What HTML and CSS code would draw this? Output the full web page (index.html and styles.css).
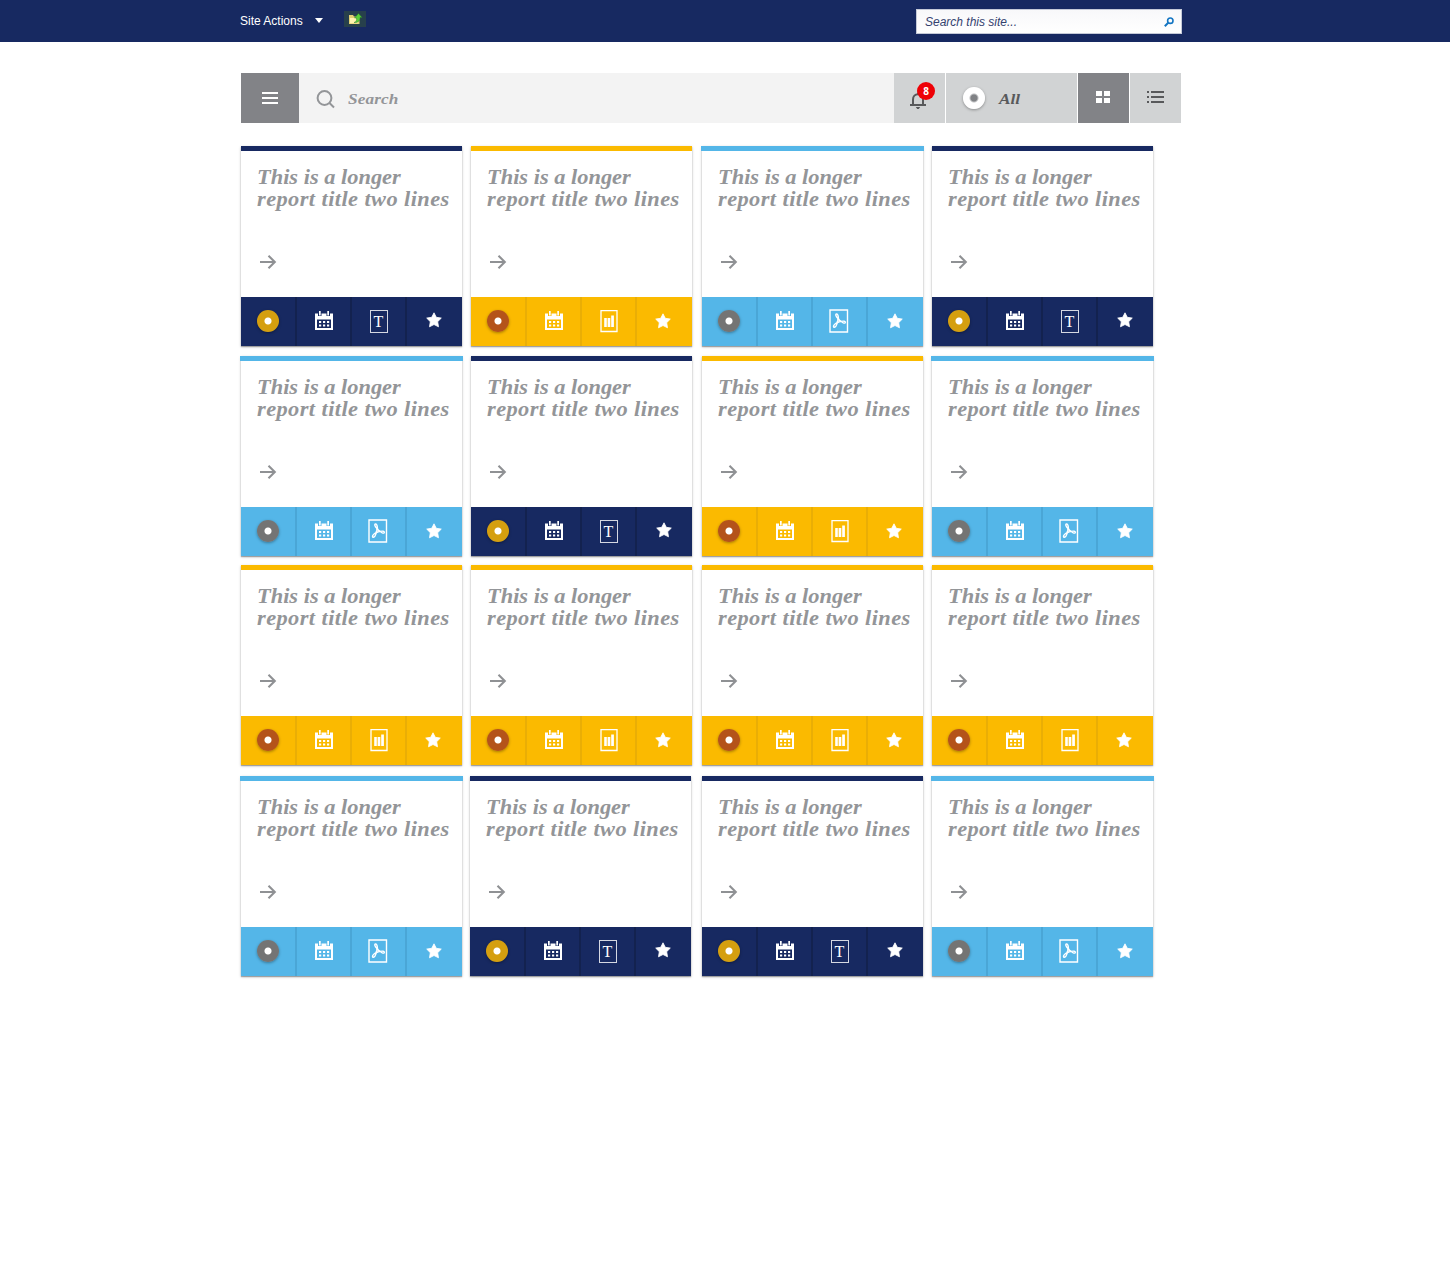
FILE: index.html
```html
<!DOCTYPE html>
<html lang="en">
<head>
<meta charset="utf-8">
<title>Reports</title>
<link rel="stylesheet" href="styles.css">
</head>
<body>
<svg class="sprite" aria-hidden="true">
  <symbol id="arrow" viewBox="0 0 18 16"><path d="M1 8h15M9.500 1.700l6.300 6.300-6.300 6.300" fill="none" stroke="currentColor" stroke-width="2.100"/></symbol>
  <symbol id="calendar" viewBox="0 0 18 19"><path fill="currentColor" fill-rule="evenodd" d="M0 2.500h3V5h3.500V2.500h5V5H15V2.500h3V19H0zM2 8.500V17h14V8.500z"/><path fill="currentColor" d="M4 0h1.700v4.500H4zM12.300 0H14v4.500h-1.700zM4 10h2.200v2H4zM8 10h2.200v2H8zM12 10h2.200v2H12zM4 13.500h2.200v2H4zM8 13.500h2.200v2H8zM12 13.500h2.200v2H12z"/></symbol>
  <symbol id="chart" viewBox="0 0 18 24"><path d="M1 1.600h16v20.900H1z" fill="none" stroke="currentColor" stroke-width="1.300"/><path fill="currentColor" d="M4.200 9h2.600v9H4.200zM7.600 9h2.700v9H7.600zM11.200 6.500h2.700V18h-2.700z"/></symbol>
  <symbol id="pdf" viewBox="0 0 20 24"><path d="M1 1h17.500v22H1z" fill="none" stroke="currentColor" stroke-width="1.400"/><path d="M7.500 5c-1.400.2-.6 2.400 1.200 4.200.5 1.500.4 2.700-.7 4.300-1.500 1-3.600 2.500-3.500 4 .1 1.100 1.500 1 2.400-.4.700-1.200 1-2.300 1.500-3.300 1.300-1 2.400-1.300 4-1.400 1.300 1.700 3.700 2.400 4 1 .1-1.400-1.900-1.500-4-1-1.500-.5-2.500-1.300-3-2.900C9.400 7.500 9 4.800 7.500 5z" fill="none" stroke="currentColor" stroke-width="1.400"/></symbol>
  <symbol id="star" viewBox="0 0 16 16"><path fill="currentColor" stroke="currentColor" stroke-width=".8" stroke-linejoin="round" d="M8 .8l2.300 4.500 5 .8-3.600 3.600.8 5.100L8 12.500l-4.500 2.300.8-5.100L.7 6.100l5-.8z"/></symbol>
</svg>

<header class="topbar">
  <div class="topbar-inner">
    <span class="site-actions">Site Actions</span>
    <span class="caret"></span>
    <svg class="folder" width="22" height="16" viewBox="0 0 22 16"><path fill="#27404c" d="M0 0h22v16H0z"/><path fill="#e2cf73" d="M5 4h4l1 1.500h5.500V13H5z"/><path fill="#fff3b0" d="M6 7h8v5.300H6z"/><path fill="#5bd03a" stroke="#257d27" stroke-width=".5" d="M10 11.500c2-.5 3-2 2.500-4.500h-2L14.500 2.500l3.500 4h-2c.2 3-2 5.500-6 5z"/></svg>
    <div class="site-search">
      <span>Search this site...</span>
      <svg width="10" height="10" viewBox="0 0 10 10"><g fill="none" stroke="#1375c2"><circle cx="6.300" cy="3.700" r="2.700" stroke-width="1.600"/><path d="M4.200 5.800L.8 9.200" stroke-width="2"/></g></svg>
    </div>
  </div>
</header>

<main class="page">
  <div class="toolbar">
    <div class="tool menu"><svg width="16" height="12" viewBox="0 0 16 12"><path d="M0 1h16M0 6h16M0 11h16" stroke="#fff" stroke-width="2"/></svg></div>
    <div class="tool search">
      <svg width="19" height="19" viewBox="0 0 19 19"><g fill="none" stroke="#939598" stroke-width="2"><circle cx="8.500" cy="8" r="6.900"/><path d="M13.500 13l4.500 4.500"/></g></svg>
      <span>Search</span>
    </div>
    <div class="tool bell">
      <svg width="16" height="17" viewBox="0 0 16 17"><path d="M3 13V7.500C3 4 5 2.300 8 2.300S13 4 13 7.500V13" fill="none" stroke="#58595b" stroke-width="2"/><path d="M0 12h16v2H0zM5.800 15h4.400L8.800 17H7.200zM7 .5h2V3H7z" fill="#58595b"/></svg>
      <span class="badge">8</span>
    </div>
    <div class="tool filter"><i class="disc white"></i><span>All</span></div>
    <div class="tool grid-view"><svg width="14" height="12" viewBox="0 0 14 12"><path fill="#fff" d="M0 0h6v5H0zM8 0h6v5H8zM0 7h6v5H0zM8 7h6v5H8z"/></svg></div>
    <div class="tool list-view"><svg width="17" height="12" viewBox="0 0 17 12"><path d="M0 1h2M0 6h2M0 11h2M4 1h13M4 6h13M4 11h13" stroke="#58595b" stroke-width="2"/></svg></div>
  </div>

  <section class="cards">
    <article class="card navy">
      <h2><span>This is a longer</span><span>report title two lines</span></h2>
      <svg class="go"><use href="#arrow"/></svg>
      <footer><b><i class="disc"></i></b><b><svg class="cal"><use href="#calendar"/></svg></b><b><em>T</em></b><b><svg class="star"><use href="#star"/></svg></b></footer>
    </article>
    <article class="card gold">
      <h2><span>This is a longer</span><span>report title two lines</span></h2>
      <svg class="go"><use href="#arrow"/></svg>
      <footer><b><i class="disc"></i></b><b><svg class="cal"><use href="#calendar"/></svg></b><b><svg class="chart"><use href="#chart"/></svg></b><b><svg class="star"><use href="#star"/></svg></b></footer>
    </article>
    <article class="card sky">
      <h2><span>This is a longer</span><span>report title two lines</span></h2>
      <svg class="go"><use href="#arrow"/></svg>
      <footer><b><i class="disc"></i></b><b><svg class="cal"><use href="#calendar"/></svg></b><b><svg class="pdf"><use href="#pdf"/></svg></b><b><svg class="star"><use href="#star"/></svg></b></footer>
    </article>
    <article class="card navy">
      <h2><span>This is a longer</span><span>report title two lines</span></h2>
      <svg class="go"><use href="#arrow"/></svg>
      <footer><b><i class="disc"></i></b><b><svg class="cal"><use href="#calendar"/></svg></b><b><em>T</em></b><b><svg class="star"><use href="#star"/></svg></b></footer>
    </article>

    <article class="card sky">
      <h2><span>This is a longer</span><span>report title two lines</span></h2>
      <svg class="go"><use href="#arrow"/></svg>
      <footer><b><i class="disc"></i></b><b><svg class="cal"><use href="#calendar"/></svg></b><b><svg class="pdf"><use href="#pdf"/></svg></b><b><svg class="star"><use href="#star"/></svg></b></footer>
    </article>
    <article class="card navy">
      <h2><span>This is a longer</span><span>report title two lines</span></h2>
      <svg class="go"><use href="#arrow"/></svg>
      <footer><b><i class="disc"></i></b><b><svg class="cal"><use href="#calendar"/></svg></b><b><em>T</em></b><b><svg class="star"><use href="#star"/></svg></b></footer>
    </article>
    <article class="card gold">
      <h2><span>This is a longer</span><span>report title two lines</span></h2>
      <svg class="go"><use href="#arrow"/></svg>
      <footer><b><i class="disc"></i></b><b><svg class="cal"><use href="#calendar"/></svg></b><b><svg class="chart"><use href="#chart"/></svg></b><b><svg class="star"><use href="#star"/></svg></b></footer>
    </article>
    <article class="card sky">
      <h2><span>This is a longer</span><span>report title two lines</span></h2>
      <svg class="go"><use href="#arrow"/></svg>
      <footer><b><i class="disc"></i></b><b><svg class="cal"><use href="#calendar"/></svg></b><b><svg class="pdf"><use href="#pdf"/></svg></b><b><svg class="star"><use href="#star"/></svg></b></footer>
    </article>

    <article class="card gold">
      <h2><span>This is a longer</span><span>report title two lines</span></h2>
      <svg class="go"><use href="#arrow"/></svg>
      <footer><b><i class="disc"></i></b><b><svg class="cal"><use href="#calendar"/></svg></b><b><svg class="chart"><use href="#chart"/></svg></b><b><svg class="star"><use href="#star"/></svg></b></footer>
    </article>
    <article class="card gold">
      <h2><span>This is a longer</span><span>report title two lines</span></h2>
      <svg class="go"><use href="#arrow"/></svg>
      <footer><b><i class="disc"></i></b><b><svg class="cal"><use href="#calendar"/></svg></b><b><svg class="chart"><use href="#chart"/></svg></b><b><svg class="star"><use href="#star"/></svg></b></footer>
    </article>
    <article class="card gold">
      <h2><span>This is a longer</span><span>report title two lines</span></h2>
      <svg class="go"><use href="#arrow"/></svg>
      <footer><b><i class="disc"></i></b><b><svg class="cal"><use href="#calendar"/></svg></b><b><svg class="chart"><use href="#chart"/></svg></b><b><svg class="star"><use href="#star"/></svg></b></footer>
    </article>
    <article class="card gold">
      <h2><span>This is a longer</span><span>report title two lines</span></h2>
      <svg class="go"><use href="#arrow"/></svg>
      <footer><b><i class="disc"></i></b><b><svg class="cal"><use href="#calendar"/></svg></b><b><svg class="chart"><use href="#chart"/></svg></b><b><svg class="star"><use href="#star"/></svg></b></footer>
    </article>

    <article class="card sky">
      <h2><span>This is a longer</span><span>report title two lines</span></h2>
      <svg class="go"><use href="#arrow"/></svg>
      <footer><b><i class="disc"></i></b><b><svg class="cal"><use href="#calendar"/></svg></b><b><svg class="pdf"><use href="#pdf"/></svg></b><b><svg class="star"><use href="#star"/></svg></b></footer>
    </article>
    <article class="card navy nudge">
      <h2><span>This is a longer</span><span>report title two lines</span></h2>
      <svg class="go"><use href="#arrow"/></svg>
      <footer><b><i class="disc"></i></b><b><svg class="cal"><use href="#calendar"/></svg></b><b><em>T</em></b><b><svg class="star"><use href="#star"/></svg></b></footer>
    </article>
    <article class="card navy">
      <h2><span>This is a longer</span><span>report title two lines</span></h2>
      <svg class="go"><use href="#arrow"/></svg>
      <footer><b><i class="disc"></i></b><b><svg class="cal"><use href="#calendar"/></svg></b><b><em>T</em></b><b><svg class="star"><use href="#star"/></svg></b></footer>
    </article>
    <article class="card sky">
      <h2><span>This is a longer</span><span>report title two lines</span></h2>
      <svg class="go"><use href="#arrow"/></svg>
      <footer><b><i class="disc"></i></b><b><svg class="cal"><use href="#calendar"/></svg></b><b><svg class="pdf"><use href="#pdf"/></svg></b><b><svg class="star"><use href="#star"/></svg></b></footer>
    </article>
  </section>
</main>
</body>
</html>
```
FILE: styles.css
```css
* { box-sizing: border-box; }
body { margin: 0; min-height: 1269px; background: #fff; font-family: "Liberation Sans", Arial, sans-serif; }
svg { display: block; flex: none; }
.sprite { display: none; }

.topbar { height: 42px; background: #172961; }
.topbar-inner { width: 942px; height: 42px; margin-left: 240px; display: flex; align-items: center; color: #fff; font-size: 12px; }
.site-actions { width: 75px; white-space: nowrap; }
.caret { border: 4.500px solid transparent; border-top: 5.500px solid #fff; border-bottom: 0; margin: 0 21px 2px 0; }
.folder { margin-bottom: 4px; }
.site-search { margin-left: auto; width: 266px; height: 25px; margin-top: 1px; padding: 0 7px 0 8px; background: linear-gradient(#f8f8fa, #fff); border: 1px solid #c5cad8; display: flex; align-items: center; justify-content: space-between; color: #34426f; font-style: italic; }

.page { width: 940px; margin: 31px 0 0 241px; }
.toolbar { height: 50px; display: flex; }
.tool { display: flex; align-items: center; justify-content: center; background: #d1d3d4; margin-left: 1px; font: italic bold 15px/20px Georgia, "Liberation Serif", serif; }
.menu, .grid-view { background: #828387; }
.menu { width: 58px; margin: 0; }
.search { width: 595px; margin: 0; padding: 2px 0 0 17px; background: #f3f3f3; justify-content: flex-start; color: #939598; }
.tool span { transform: scaleX(1.15); transform-origin: 0 50%; }
.search span { margin-left: 13px; letter-spacing: .1px; }
.bell { position: relative; width: 51px; margin: 0; padding: 5px 3px 0 0; }
.tool .badge { position: absolute; left: 23px; top: 9px; width: 18px; height: 18px; border-radius: 50%; background: #ee0006; color: #fff; font: bold 10px/18px "Open Sans", sans-serif; text-align: center; transform: none; }
.filter { width: 131px; padding-left: 17px; justify-content: flex-start; color: #58595b; }
.filter span { margin: 2px 0 0 14px; }
.grid-view, .list-view { width: 51px; padding-bottom: 2px; }
.grid-view { padding-right: 1px; }

.cards { margin-top: 23px; display: grid; grid-template-columns: 230px 231px 230px 221px; grid-template-rows: 210px 209px 211px 200px; align-items: start; }
.card { width: 221px; height: 200px; display: flex; flex-direction: column; background: #fff; box-shadow: 0 1px 1px rgba(0,0,0,.28), 0 1px 3px rgba(0,0,0,.2); }
.card::before { content: ""; height: 5px; flex: none; background: var(--tone); }
.sky::before { margin: 0 -1px; }
.nudge { margin-left: -1px; }
.navy { --tone: #172961; --line: #13224f; --disc: #d59f0f; }
.gold { --tone: #fbba00; --line: #eaae05; --disc: #b4531a; }
.sky { --tone: #54b6e8; --line: #4aa6d6; --disc: #747474; }
.card h2 { margin: 15px 0 0 16px; color: #939598; font: italic bold 20px/22px Georgia, "Liberation Serif", serif; white-space: nowrap; transform: scaleX(1.12); transform-origin: 0 0; width: 175px; }
.card h2 span { display: block; }
.card h2 span + span { letter-spacing: .37px; }
.go { width: 18px; height: 16px; margin: 44px 0 0 18px; color: #8f9194; }
.card footer { margin-top: auto; height: 49px; display: flex; background: var(--tone); color: #fff; }
.card footer b { flex: 0 0 55px; display: flex; align-items: center; justify-content: center; font-weight: normal; border-right: 1px solid var(--line); box-shadow: 1px 0 var(--line); padding-bottom: 1px; }
.card footer b:last-child { flex: 1; padding-right: 1px; border: 0; box-shadow: none; }
.card footer b:nth-child(2) { padding-left: 2px; }
.disc { width: 22px; height: 22px; border-radius: 50%; background: radial-gradient(circle, #fff 3px, var(--disc) 4px); box-shadow: 0 1px 3px rgba(0,0,0,.35); }
.disc.white { background: radial-gradient(circle, #808285 3px, #fff 5px); }
.cal { width: 18px; height: 19px; margin-bottom: 1px; }
.chart { width: 18px; height: 24px; margin-left: 1px; }
.pdf { width: 20px; height: 24px; }
.star { width: 16px; height: 16px; }
.navy .star { margin-top: -2px; }
.gold .star { margin-right: 2px; }
.card em { width: 18px; height: 23px; margin: 1px 0 0 1px; border: 1px solid #d5d8e2; font: 16px/21px "Liberation Serif", serif; text-align: center; }
```
